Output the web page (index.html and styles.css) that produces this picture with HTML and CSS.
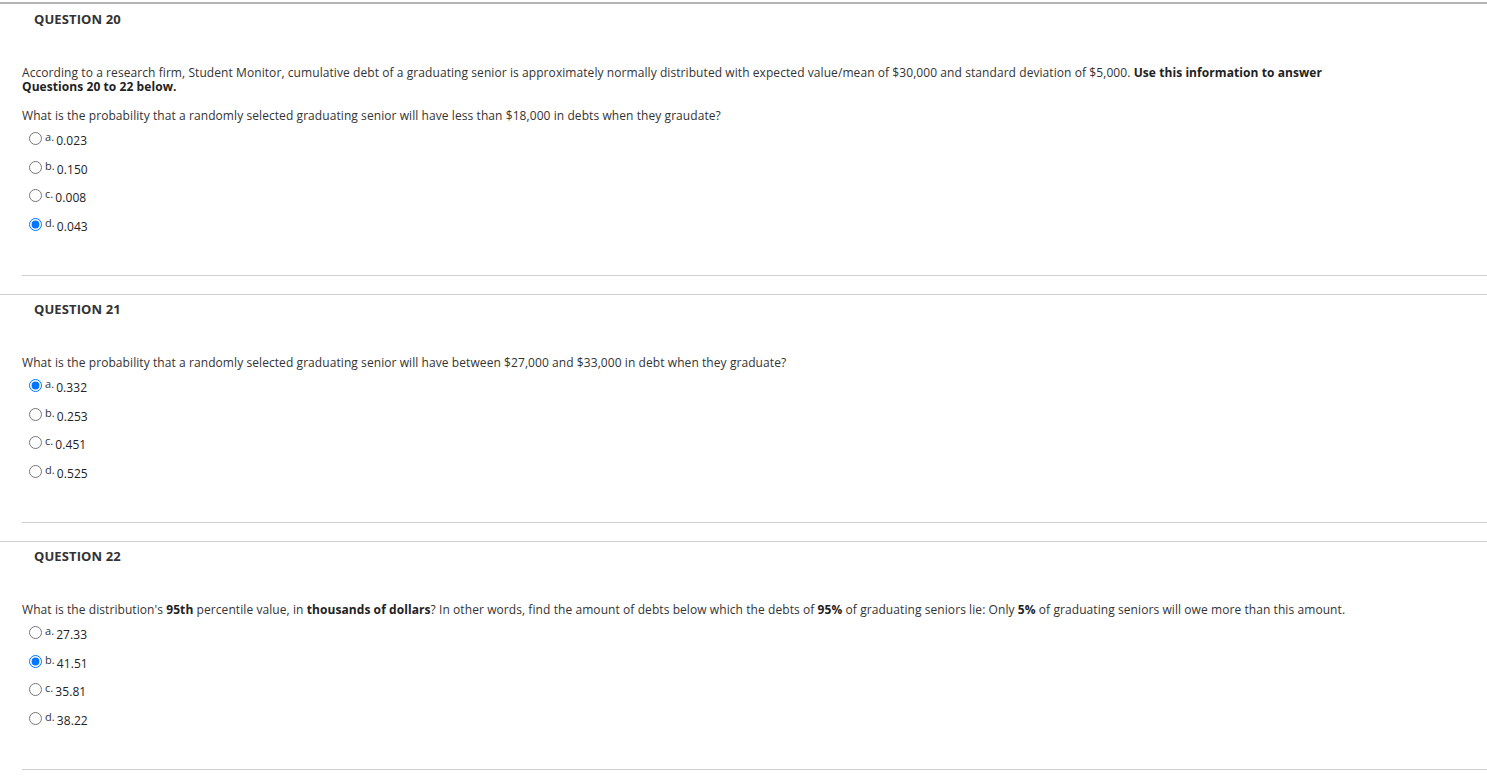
FILE: index.html
```html
<!DOCTYPE html>
<html>
<head>
<meta charset="utf-8">
<link rel="stylesheet" href="styles.css">
</head>
<body>
<div class="page">
  <section class="question first">
    <h3 class="q-title">QUESTION 20</h3>
    <div class="q-body">
      <p class="q-intro">According to a research firm, Student Monitor, cumulative debt of a graduating senior is approximately normally distributed with expected value/mean of $30,000 and standard deviation of $5,000. <b>Use this information to answer<br>Questions 20 to 22 below.</b></p>
      <p class="q-text after-intro">What is the probability that a randomly selected graduating senior will have less than $18,000 in debts when they graudate?</p>
      <ul class="options">
        <li class="option"><input class="radio" type="radio" name="q20"><span class="letter">a.</span><span class="answer">0.023</span></li>
        <li class="option"><input class="radio" type="radio" name="q20"><span class="letter">b.</span><span class="answer">0.150</span></li>
        <li class="option"><input class="radio" type="radio" name="q20"><span class="letter">c.</span><span class="answer">0.008</span></li>
        <li class="option"><input class="radio" type="radio" name="q20" checked><span class="letter">d.</span><span class="answer">0.043</span></li>
      </ul>
    </div>
  </section>
  <section class="question">
    <h3 class="q-title">QUESTION 21</h3>
    <div class="q-body">
      <p class="q-text">What is the probability that a randomly selected graduating senior will have between $27,000 and $33,000 in debt when they graduate?</p>
      <ul class="options">
        <li class="option"><input class="radio" type="radio" name="q21" checked><span class="letter">a.</span><span class="answer">0.332</span></li>
        <li class="option"><input class="radio" type="radio" name="q21"><span class="letter">b.</span><span class="answer">0.253</span></li>
        <li class="option"><input class="radio" type="radio" name="q21"><span class="letter">c.</span><span class="answer">0.451</span></li>
        <li class="option"><input class="radio" type="radio" name="q21"><span class="letter">d.</span><span class="answer">0.525</span></li>
      </ul>
    </div>
  </section>
  <section class="question">
    <h3 class="q-title">QUESTION 22</h3>
    <div class="q-body">
      <p class="q-text">What is the distribution's <b>95th</b> percentile value, in <b>thousands of dollars</b>? In other words, find the amount of debts below which the debts of <b>95%</b> of graduating seniors lie: Only <b>5%</b> of graduating seniors will owe more than this amount.</p>
      <ul class="options">
        <li class="option"><input class="radio" type="radio" name="q22"><span class="letter">a.</span><span class="answer">27.33</span></li>
        <li class="option"><input class="radio" type="radio" name="q22" checked><span class="letter">b.</span><span class="answer">41.51</span></li>
        <li class="option"><input class="radio" type="radio" name="q22"><span class="letter">c.</span><span class="answer">35.81</span></li>
        <li class="option"><input class="radio" type="radio" name="q22"><span class="letter">d.</span><span class="answer">38.22</span></li>
      </ul>
    </div>
  </section>
</div>
</body>
</html>
```

FILE: styles.css
```css
html, body {
  margin: 0;
  padding: 0;
  background: #fff;
}
body {
  font-family: "Open Sans", "Liberation Sans", sans-serif;
  font-size: 12px;
  letter-spacing: 0.075px;
  color: #333;
}
.page {
  padding-top: 2px;
}
.question {
  border-top: 1px solid #cfcfcf;
  margin-bottom: 18px;
}
.question.first {
  border-top: 2px solid #b5b5b5;
}
.q-title {
  margin: 0;
  padding: 5px 0 0 34px;
  font-size: 13px;
  line-height: 18px;
  font-weight: 700;
  letter-spacing: 0.1px;
  color: #333;
}
.question.first .q-title {
  padding-top: 6px;
}
.q-body {
  margin-left: 22px;
  border-bottom: 1px solid #cfcfcf;
  padding-bottom: 38px;
}
.q-intro {
  margin: 38px 0 0;
  line-height: 14px;
}
.q-intro b, .q-text b {
  font-weight: 700;
  color: #222;
}
.q-text {
  margin: 38px 0 0;
  line-height: 14px;
}
.q-text.after-intro {
  margin-top: 15px;
}
.options {
  list-style: none;
  margin: 0;
  padding: 0;
}
.option {
  display: flex;
  align-items: flex-start;
  height: 28.5px;
}
.radio {
  margin: 9px 0 0 7px;
  width: 13px;
  height: 13px;
  flex: none;
}
.letter {
  font-size: 11px;
  line-height: 14px;
  margin: 7px 0 0 3px;
  color: #333;
}
.answer {
  font-size: 12px;
  line-height: 14px;
  margin: 11px 0 0 2px;
  color: #222;
}
```
